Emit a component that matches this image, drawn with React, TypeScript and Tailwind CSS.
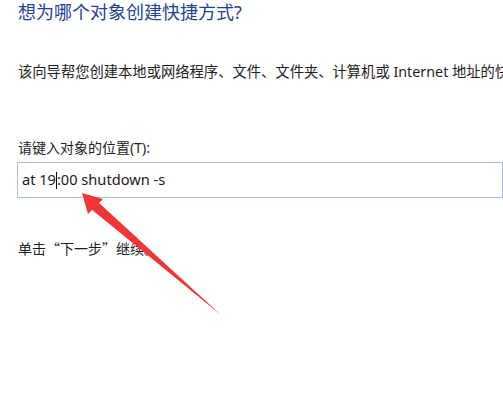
import React from "react";

export default function App() {
  const font = { fontFamily: '"Noto Sans", "Noto Sans CJK SC", sans-serif' };
  const cjk = { fontFamily: '"Noto Sans CJK SC", "Noto Sans", sans-serif' };
  return (
    <div className="relative w-[503px] h-[400px] bg-white overflow-hidden" style={font}>
      <div className="flex flex-col pl-[18px]">
        <div className="text-[18px] leading-[22px] pt-[1px] text-[#1f3f9a] whitespace-nowrap">
          想为哪个对象创建快捷方式?
        </div>
        <div className="mt-[39px] text-[14.3px] leading-[20px] text-[#1e1e1e] whitespace-nowrap">
          该向导帮您创建本地或网络程序、文件、文件夹、计算机或 Internet 地址的快捷方式。
        </div>
        <div className="mt-[56px] text-[14px] leading-[20px] text-[#1e1e1e] whitespace-nowrap">
          请键入对象的位置(T):
        </div>
        <div className="mt-[4px] ml-[-1px] w-[486px] h-[36px] border border-[#adbfd6] flex items-center pl-[4px] text-[14.6px] text-[#1a1a1a]">
          <span>at 19</span>
          <span className="inline-block w-[1px] h-[17px] bg-black"></span>
          <span>:00 shutdown -s</span>
        </div>
        <div className="mt-[40px] text-[14px] leading-[20px] text-[#1e1e1e] whitespace-nowrap" style={cjk}>
          单击“下一步”继续。
        </div>
      </div>
      <svg className="absolute left-0 top-0" width="503" height="400" viewBox="0 0 503 400">
        <polygon points="82,193 103,199 88,214" fill="#ef3535" />
        <polygon points="98,202 91,209 221,315" fill="#ef3535" />
      </svg>
    </div>
  );
}
